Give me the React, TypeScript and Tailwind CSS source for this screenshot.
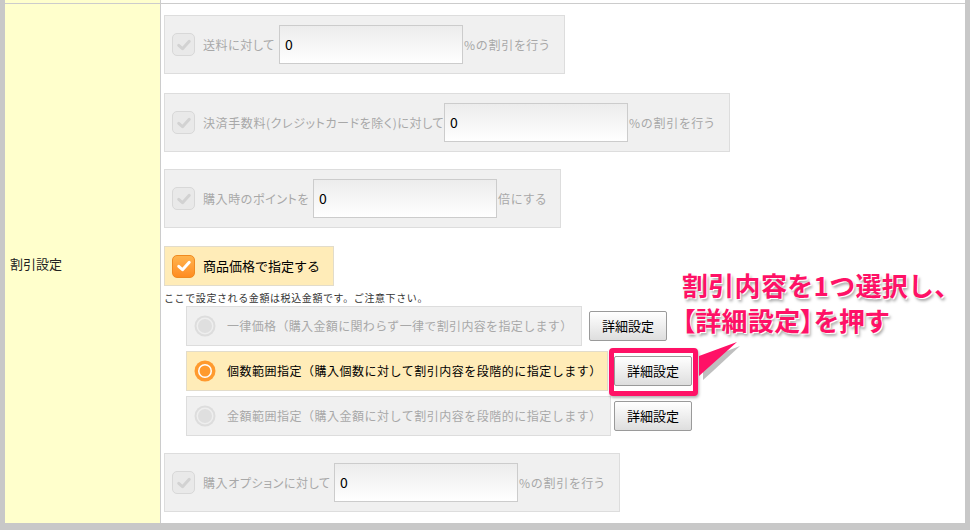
import React from 'react';

const FONT = "font-['Noto_Sans_CJK_JP','Noto_Sans_CJK_SC',sans-serif]";

function CheckMark({ color }: { color: string }) {
  return (
    <svg viewBox="0 0 24 24" className="w-[18px] h-[18px]">
      <path d="M5 12.5 L10 17 L19 7" fill="none" stroke={color} strokeWidth="4" strokeLinecap="round" strokeLinejoin="round" />
    </svg>
  );
}

function Checkbox({ checked }: { checked?: boolean }) {
  if (checked) {
    return (
      <span className="w-[23px] h-[23px] shrink-0 rounded-[5px] bg-gradient-to-b from-[#ffb44d] to-[#ff8c1f] border border-[#f08a20] flex items-center justify-center">
        <CheckMark color="#ffffff" />
      </span>
    );
  }
  return (
    <span className="w-[23px] h-[23px] shrink-0 rounded-[5px] bg-[#e9e9e9] border border-[#d8d8d8] flex items-center justify-center">
      <CheckMark color="#d2d2d2" />
    </span>
  );
}

function Radio({ checked }: { checked?: boolean }) {
  return (
    <svg viewBox="0 0 22 22" className="w-[22px] h-[22px] shrink-0">
      {checked ? (
        <>
          <circle cx="11" cy="11" r="10.5" fill="#ff9a2e" />
          <circle cx="11" cy="11" r="7" fill="#ffffff" />
          <circle cx="11" cy="11" r="5.5" fill="#ff9a2e" />
        </>
      ) : (
        <>
          <circle cx="11" cy="11" r="10.5" fill="#dddddd" />
          <circle cx="11" cy="11" r="8.5" fill="#eeeeee" />
          <circle cx="11" cy="11" r="7" fill="#dfdfdf" />
        </>
      )}
    </svg>
  );
}

function NumInput() {
  return (
    <div className="w-[184px] h-[39px] shrink-0 border border-[#cccccc] bg-gradient-to-b from-[#ececec] to-white flex items-center pl-[5px] text-[14px] text-black">
      0
    </div>
  );
}

function InputBox({ width, labelWidth, label, suffix }: { width: string; labelWidth: string; label: string; suffix: string }) {
  return (
    <div className={`${width} h-[59px] border border-[#dddddd] bg-[#f0f0f0] flex items-center pl-[7px] text-[12px] text-[#a8a8a8]`}>
      <Checkbox />
      <span className={`${labelWidth} ml-[8px] whitespace-nowrap tracking-[0.6px] [font-feature-settings:'palt']`}>{label}</span>
      <NumInput />
      <span className="ml-[1px] whitespace-nowrap tracking-[0.9px] [font-feature-settings:'palt']">{suffix}</span>
    </div>
  );
}

function DetailButton() {
  return (
    <button
      type="button"
      className="w-[78px] h-[30px] rounded-[2px] border border-[#9a9a9a] bg-gradient-to-b from-white to-[#dedede] text-[13px] text-black"
    >
      詳細設定
    </button>
  );
}

export default function App() {
  return (
    <div className={`relative w-[970px] h-[530px] bg-white ${FONT}`}>
      <div className="flex flex-col h-full border-l-[5px] border-r-[5px] border-b-[7px] border-[#c8c8c8]">
        <div className="flex h-[4px] border-b border-[#cccccc]">
          <div className="w-[156px] bg-[#ffffcc] border-r border-[#cccccc]" />
          <div className="flex-1" />
        </div>
        <div className="flex flex-1">
          <div className="w-[156px] bg-[#ffffcc] border-r border-[#cccccc] flex items-center pl-[5px] text-[13px] text-[#222]">
            割引設定
          </div>
          <div className="flex-1 pl-[3px] pt-[11px] flex flex-col items-start">
            <InputBox width="w-[401px]" labelWidth="w-[76px]" label="送料に対して" suffix="%の割引を行う" />
            <div className="mt-[19px]">
              <InputBox width="w-[566px]" labelWidth="w-[241px]" label="決済手数料(クレジットカードを除く)に対して" suffix="%の割引を行う" />
            </div>
            <div className="mt-[17px]">
              <InputBox width="w-[397px]" labelWidth="w-[110px]" label="購入時のポイントを" suffix="倍にする" />
            </div>

            <div className="mt-[18px] w-[170px] h-[40px] border border-[#e2dccb] bg-[#ffecb8] flex items-center pl-[7px]">
              <Checkbox checked />
              <span className="ml-[8px] text-[13px] text-black whitespace-nowrap">商品価格で指定する</span>
            </div>
            <div className="mt-[3px] h-[16px] flex items-center text-[10px] text-[#333] whitespace-nowrap tracking-[0.6px]">
              ここで設定される金額は税込金額です。ご注意下さい。
            </div>

            <div className="mt-[1px] ml-[22px] flex items-center">
              <div className="w-[396px] h-[40px] border border-[#dddddd] bg-[#f0f0f0] flex items-center pl-[7px] text-[12px] text-[#a8a8a8] whitespace-nowrap tracking-[0.35px]">
                <Radio />
                <span className="ml-[11px]">一律価格（購入金額に関わらず一律で割引内容を指定します）</span>
              </div>
              <div className="ml-[7px]">
                <DetailButton />
              </div>
            </div>

            <div className="mt-[5px] ml-[22px] flex items-center">
              <div className="w-[422px] h-[40px] border border-[#e2dccb] bg-[#ffecb8] flex items-center pl-[7px] text-[12px] text-black whitespace-nowrap tracking-[0.5px]">
                <Radio checked />
                <span className="ml-[11px]">個数範囲指定（購入個数に対して割引内容を段階的に指定します）</span>
              </div>
              <div className="relative ml-[6px]">
                <div className="absolute left-[-5px] top-[-8px] w-[89px] h-[48px] rounded-[4px] border-[5px] border-[#ff1166] bg-white shadow-[1px_2px_3px_rgba(0,0,0,0.3)]" />
                <div className="relative">
                  <DetailButton />
                </div>
              </div>
            </div>

            <div className="mt-[5px] ml-[22px] flex items-center">
              <div className="w-[425px] h-[40px] border border-[#dddddd] bg-[#f0f0f0] flex items-center pl-[7px] text-[12px] text-[#a8a8a8] whitespace-nowrap tracking-[0.5px]">
                <Radio />
                <span className="ml-[11px]">金額範囲指定（購入金額に対して割引内容を段階的に指定します）</span>
              </div>
              <div className="ml-[3px]">
                <DetailButton />
              </div>
            </div>

            <div className="mt-[17px]">
              <InputBox width="w-[456px]" labelWidth="w-[131px]" label="購入オプションに対して" suffix="%の割引を行う" />
            </div>
          </div>
        </div>
      </div>

      {/* annotation */}
      <div className="absolute left-[682px] top-[267px] text-[26px] font-bold leading-[35px] text-[#ff1166] whitespace-nowrap tracking-[0.3px] [text-shadow:1px_1px_0_#fff,2px_3px_3px_rgba(0,0,0,0.35)]">
        <div>割引内容を1つ選択し、</div>
        <div className="[font-feature-settings:'palt']">【詳細設定】を押す</div>
      </div>
      <svg className="absolute left-[690px] top-[338px]" width="56" height="46" viewBox="690 338 56 46">
        <polygon points="701,357 738,343 711,368 701,377" fill="rgba(0,0,0,0.25)" transform="translate(2,3)" />
        <polygon points="699,356 737,342 709,367 699,376" fill="#ff1166" />
      </svg>
    </div>
  );
}
